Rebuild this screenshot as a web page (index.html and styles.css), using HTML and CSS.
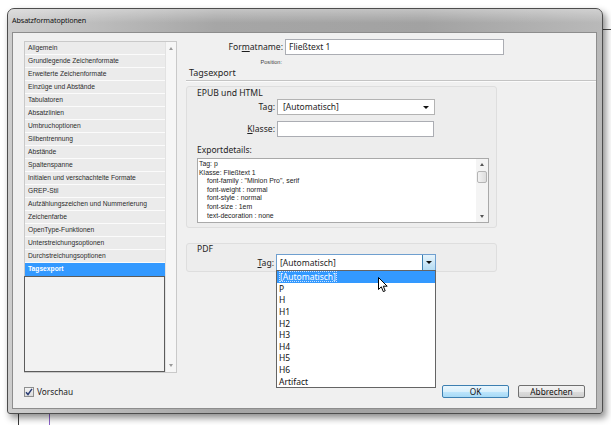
FILE: index.html
```html
<!DOCTYPE html>
<html>
<head>
<meta charset="utf-8">
<title>Absatzformatoptionen</title>
<link rel="stylesheet" href="styles.css">
</head>
<body>
<div class="window">
  <div class="titlebar">Absatzformatoptionen</div>
  <div class="client">
    <div class="main">
      <div class="catlist">
        <div class="items">
          <div class="item">Allgemein</div>
          <div class="item">Grundlegende Zeichenformate</div>
          <div class="item">Erweiterte Zeichenformate</div>
          <div class="item">Einzüge und Abstände</div>
          <div class="item">Tabulatoren</div>
          <div class="item">Absatzlinien</div>
          <div class="item">Umbruchoptionen</div>
          <div class="item">Silbentrennung</div>
          <div class="item">Abstände</div>
          <div class="item">Spaltenspanne</div>
          <div class="item">Initialen und verschachtelte Formate</div>
          <div class="item">GREP-Stil</div>
          <div class="item">Aufzählungszeichen und Nummerierung</div>
          <div class="item">Zeichenfarbe</div>
          <div class="item">OpenType-Funktionen</div>
          <div class="item">Unterstreichungsoptionen</div>
          <div class="item">Durchstreichungsoptionen</div>
          <div class="item selected">Tagsexport</div>
          <div class="blank"></div>
        </div>
        <div class="vscroll">
          <span class="arr up"></span>
          <span class="arr down"></span>
        </div>
      </div>
      <div class="panel">
        <div class="name-row">
          <span class="lbl name-lbl">For<u>m</u>atname:</span>
          <span class="field name-field">Fließtext 1</span>
        </div>
        <div class="position">Position:</div>
        <div class="section-title">Tagsexport</div>
        <div class="group epub">
          <div class="group-title">EPUB und HTML</div>
          <div class="frow">
            <span class="lbl glbl">Ta<u>g</u>:</span>
            <span class="field select epub-select">[Automatisch]<span class="tri"></span></span>
          </div>
          <div class="frow klasse-row">
            <span class="lbl glbl"><u>K</u>lasse:</span>
            <span class="field klasse-field"></span>
          </div>
          <div class="details-lbl">Exportdetails:</div>
          <div class="details">
            <div class="details-text">
              <div>Tag: p</div>
              <div>Klasse: Fließtext 1</div>
              <div class="ind">font-family : "Minion Pro", serif</div>
              <div class="ind">font-weight : normal</div>
              <div class="ind">font-style : normal</div>
              <div class="ind">font-size : 1em</div>
              <div class="ind">text-decoration : none</div>
            </div>
            <div class="dscroll">
              <span class="arr up"></span>
              <span class="thumb"></span>
              <span class="arr down"></span>
            </div>
          </div>
        </div>
        <div class="group pdf">
          <div class="group-title pdf-title">PDF</div>
          <div class="frow pdf-row">
            <span class="lbl plbl"><u>T</u>ag:</span>
            <div class="combo">
              <span class="combo-text">[Automatisch]</span>
              <span class="combo-btn"><span class="tri"></span></span>
              <div class="dropdown">
                <div class="opt hl"><span class="focus">[Automatisch]</span></div>
                <div class="opt">P</div>
                <div class="opt">H</div>
                <div class="opt">H1</div>
                <div class="opt">H2</div>
                <div class="opt">H3</div>
                <div class="opt">H4</div>
                <div class="opt">H5</div>
                <div class="opt">H6</div>
                <div class="opt">Artifact</div>
                <svg class="cursor" width="11" height="16" viewBox="0 0 11 16"><path d="M0.5 0.5 L0.5 12.5 L3.3 9.8 L5.3 14.6 L7.2 13.8 L5.3 9.2 L9.2 9.2 Z" fill="#fff" stroke="#000" stroke-width="1" stroke-linejoin="round"/></svg>
              </div>
            </div>
          </div>
        </div>
      </div>
    </div>
    <div class="footer">
      <span class="check"><svg width="8" height="8" viewBox="0 0 8 8"><path d="M1 4.2 L3 6.5 L7 0.8" fill="none" stroke="#2a3d75" stroke-width="1.4"/></svg></span>
      <span class="check-lbl">Vorschau</span>
      <span class="spacer"></span>
      <span class="btn ok">OK</span>
      <span class="btn cancel">Abbrechen</span>
    </div>
  </div>
</div>
</body>
</html>
```

FILE: styles.css
```css
* { box-sizing: border-box; margin: 0; padding: 0; }
html, body { width: 611px; height: 425px; overflow: hidden; }
body {
  background:
    linear-gradient(#3a3a3a, #3a3a3a) no-repeat 18px 414px / 1px 11px,
    linear-gradient(#8b62c9, #8b62c9) no-repeat 49px 414px / 1px 11px,
    linear-gradient(#4a4a4a, #4a4a4a) no-repeat 603px 29px / 8px 1px,
    #fff;
  font-family: "Noto Sans", "Open Sans", sans-serif;
  color: #1e1e1e;
}
u { text-decoration: underline; text-underline-offset: 1px; }

.window {
  margin: 8px 0 0 7px;
  width: 596px;
  height: 406px;
  border: 1px solid #4d4d4d;
  border-radius: 7px 7px 3px 3px;
  background: linear-gradient(to right, #cdcdcd 0%, #bdbdbd 14%, #a6a6a6 35%, #a2a2a2 70%, #b9b9b9 100%);
  padding: 0 5px 4px 4px;
  display: flex;
  flex-direction: column;
  box-shadow: 3px 4px 7px rgba(0,0,0,0.45);
}
.titlebar {
  height: 23px;
  padding: 6px 0 0 4px;
  font-size: 7.2px;
  line-height: 11px;
  letter-spacing: -0.1px;
  color: #111;
  background: linear-gradient(to bottom, rgba(255,255,255,0.35), rgba(255,255,255,0) 60%);
  margin: 0 -5px 0 -4px;
  border-radius: 6px 6px 0 0;
}

.client {
  flex: 1;
  background: #f0f0f0;
  border: 1px solid #8d8d8d;
  display: flex;
  flex-direction: column;
  padding: 6px 0 0 11px;
}
.main {
  display: flex;
  height: 334px;
}

/* category list */
.catlist {
  margin-top: 2px;
  width: 153px;
  height: 332px;
  border: 1px solid #c9c9c9;
  display: flex;
  background: #f3f3f3;
}
.items {
  width: 140px;
  display: flex;
  flex-direction: column;
}
.item {
  height: 13px;
  background: #ebebeb;
  border-bottom: 1px solid #fbfbfb;
  font-family: "Liberation Sans Narrow", "Liberation Sans", Arial, sans-serif;
  font-size: 6.7px;
  line-height: 12px;
  padding-left: 3px;
  color: #2b2b2b;
  white-space: nowrap;
}
.item.selected {
  background: #3399ff;
  color: #fff;
  border-bottom-color: #3399ff;
  font-weight: bold;
}
.blank {
  flex: 1;
  margin-left: -1px;
  border: 1px solid #5c5c5c;
  background: #f2f2f2;
}
.vscroll {
  flex: 1;
  border-left: 1px solid #e2e2e2;
  background: #f6f6f6;
  display: flex;
  flex-direction: column;
  justify-content: space-between;
  align-items: center;
  padding: 5px 0 5px;
}
.arr {
  width: 0; height: 0;
  border-left: 2.5px solid transparent;
  border-right: 2.5px solid transparent;
}
.arr.up { border-bottom: 3px solid #9a9a9a; }
.arr.down { border-top: 3px solid #9a9a9a; }

/* right panel */
.panel {
  margin-left: 9px;
  flex: 1;
  display: flex;
  flex-direction: column;
}
.lbl {
  font-size: 8.6px;
  text-align: right;
  color: #1e1e1e;
  white-space: nowrap;
}
.field {
  background: #fff;
  border: 1px solid #abadb3;
  font-size: 8.5px;
  line-height: 14px;
  padding-left: 3px;
  white-space: nowrap;
}
.name-row {
  display: flex;
  align-items: center;
  height: 16px;
}
.name-lbl { width: 99px; padding-right: 2px; }
.name-field { width: 219px; height: 16px; }
.position {
  margin-top: 3px;
  width: 96px;
  text-align: right;
  font-family: "Liberation Sans", Arial, sans-serif;
  font-size: 5.6px;
  line-height: 8px;
  color: #444;
}
.section-title {
  margin-top: 1px;
  height: 14px;
  font-size: 9px;
  line-height: 12px;
  padding-left: 3px;
  border-bottom: 1px solid #c4c4c4;
  box-shadow: 0 1px 0 #fbfbfb;
}

.group {
  width: 311px;
  border: 1px solid #dedede;
  border-radius: 3px;
  background: #ededed;
}
.epub { margin-top: 5px; height: 142px; }
.group-title {
  padding-left: 10px;
  font-size: 8.6px;
  line-height: 12px;
}
.frow {
  display: flex;
  align-items: center;
  height: 16px;
}
.glbl { width: 88px; padding-right: 0; margin-right: 1px; }
.select { position: relative; }
.epub-select { width: 158px; height: 16px; margin-left: 1px; padding-left: 5px; border-color: #b3b3b3; }
.epub-select .tri {
  position: absolute;
  right: 5px;
  top: 6px;
  width: 0; height: 0;
  border-left: 3px solid transparent;
  border-right: 3px solid transparent;
  border-top: 3px solid #111;
}
.klasse-row { margin-top: 6px; }
.klasse-field { width: 157px; height: 16px; margin-left: 1px; }
.details-lbl {
  margin-top: 7px;
  padding-left: 10px;
  font-size: 8.5px;
  line-height: 12px;
}
.details {
  margin: 2px 0 0 10px;
  width: 292px;
  height: 65px;
  border: 1px solid #a9a9a9;
  background: #fff;
  display: flex;
  overflow: hidden;
}
.details-text {
  flex: 1;
  padding: 1px 0 0 1px;
  font-family: "Liberation Sans", Arial, sans-serif;
  font-size: 6.9px;
  line-height: 8.6px;
  color: #222;
  white-space: nowrap;
  overflow: hidden;
}
.details-text .ind { padding-left: 8px; }
.dscroll {
  width: 12px;
  background: #f4f4f4;
  display: flex;
  flex-direction: column;
  align-items: center;
  padding: 4px 0 4px;
}
.dscroll .thumb {
  margin-top: 5px;
  width: 10px;
  height: 12px;
  border: 1px solid #b5b5b5;
  border-radius: 2px;
  background: linear-gradient(to right, #f3f3f3, #dedede);
}
.dscroll .down { margin-top: auto; }
.dscroll .arr.up, .dscroll .arr.down { border-top-color: #555; border-bottom-color: #555; }

.pdf { margin-top: 15px; height: 29px; }
.pdf-title { line-height: 9px; padding-top: 1px; }
.pdf-row { height: 17px; margin-top: 0; }
.plbl { width: 87px; margin-right: 2px; }
.combo {
  position: relative;
  width: 160px;
  height: 17px;
  border: 1px solid #6f9fcf;
  background: #fff;
  display: flex;
}
.combo-text {
  flex: 1;
  font-size: 8.5px;
  line-height: 15px;
  padding-left: 3px;
}
.combo-btn {
  width: 13px;
  border-left: 1px solid #3c7fb1;
  background: linear-gradient(to bottom, #e7f4fb, #b5dcf3);
  display: flex;
  align-items: center;
  justify-content: center;
}
.combo-btn .tri {
  width: 0; height: 0;
  border-left: 3px solid transparent;
  border-right: 3px solid transparent;
  border-top: 3px solid #111;
}
.dropdown {
  position: absolute;
  left: -1px;
  top: 15px;
  width: 160px;
  height: 118px;
  background: #fff;
  border: 1px solid #646464;
  z-index: 5;
}
.opt {
  height: 11.65px;
  font-size: 8.5px;
  line-height: 11.65px;
  padding-left: 2px;
  color: #111;
}
.opt.hl { background: #3399ff; color: #fff; }
.focus { outline: 1px dotted #cfe4ff; outline-offset: -1px; padding: 0 1px; }
.cursor {
  position: absolute;
  left: 101px;
  top: 6px;
}

/* footer */
.footer {
  margin-top: 12px;
  height: 13px;
  display: flex;
  align-items: center;
  padding-right: 11px;
}
.check {
  width: 10px;
  height: 10px;
  border: 1px solid #8e8f8f;
  background: linear-gradient(to bottom, #f4f4f4, #dcdcdc);
  display: flex;
  align-items: center;
  justify-content: center;
}
.check-lbl {
  margin-left: 3px;
  font-size: 8.3px;
  line-height: 12px;
}
.spacer { flex: 1; }
.btn {
  height: 13px;
  border-radius: 2px;
  font-size: 8.3px;
  line-height: 11px;
  text-align: center;
  color: #111;
}
.ok {
  width: 67px;
  border: 1px solid #3c7fb1;
  background: linear-gradient(to bottom, #eaf6fd 0%, #d9f0fc 50%, #bee6fd 51%, #a7d9f5 100%);
}
.cancel {
  margin-left: 9px;
  width: 67px;
  border: 1px solid #707070;
  background: linear-gradient(to bottom, #f2f2f2 0%, #ebebeb 50%, #dddddd 51%, #cfcfcf 100%);
}
```
